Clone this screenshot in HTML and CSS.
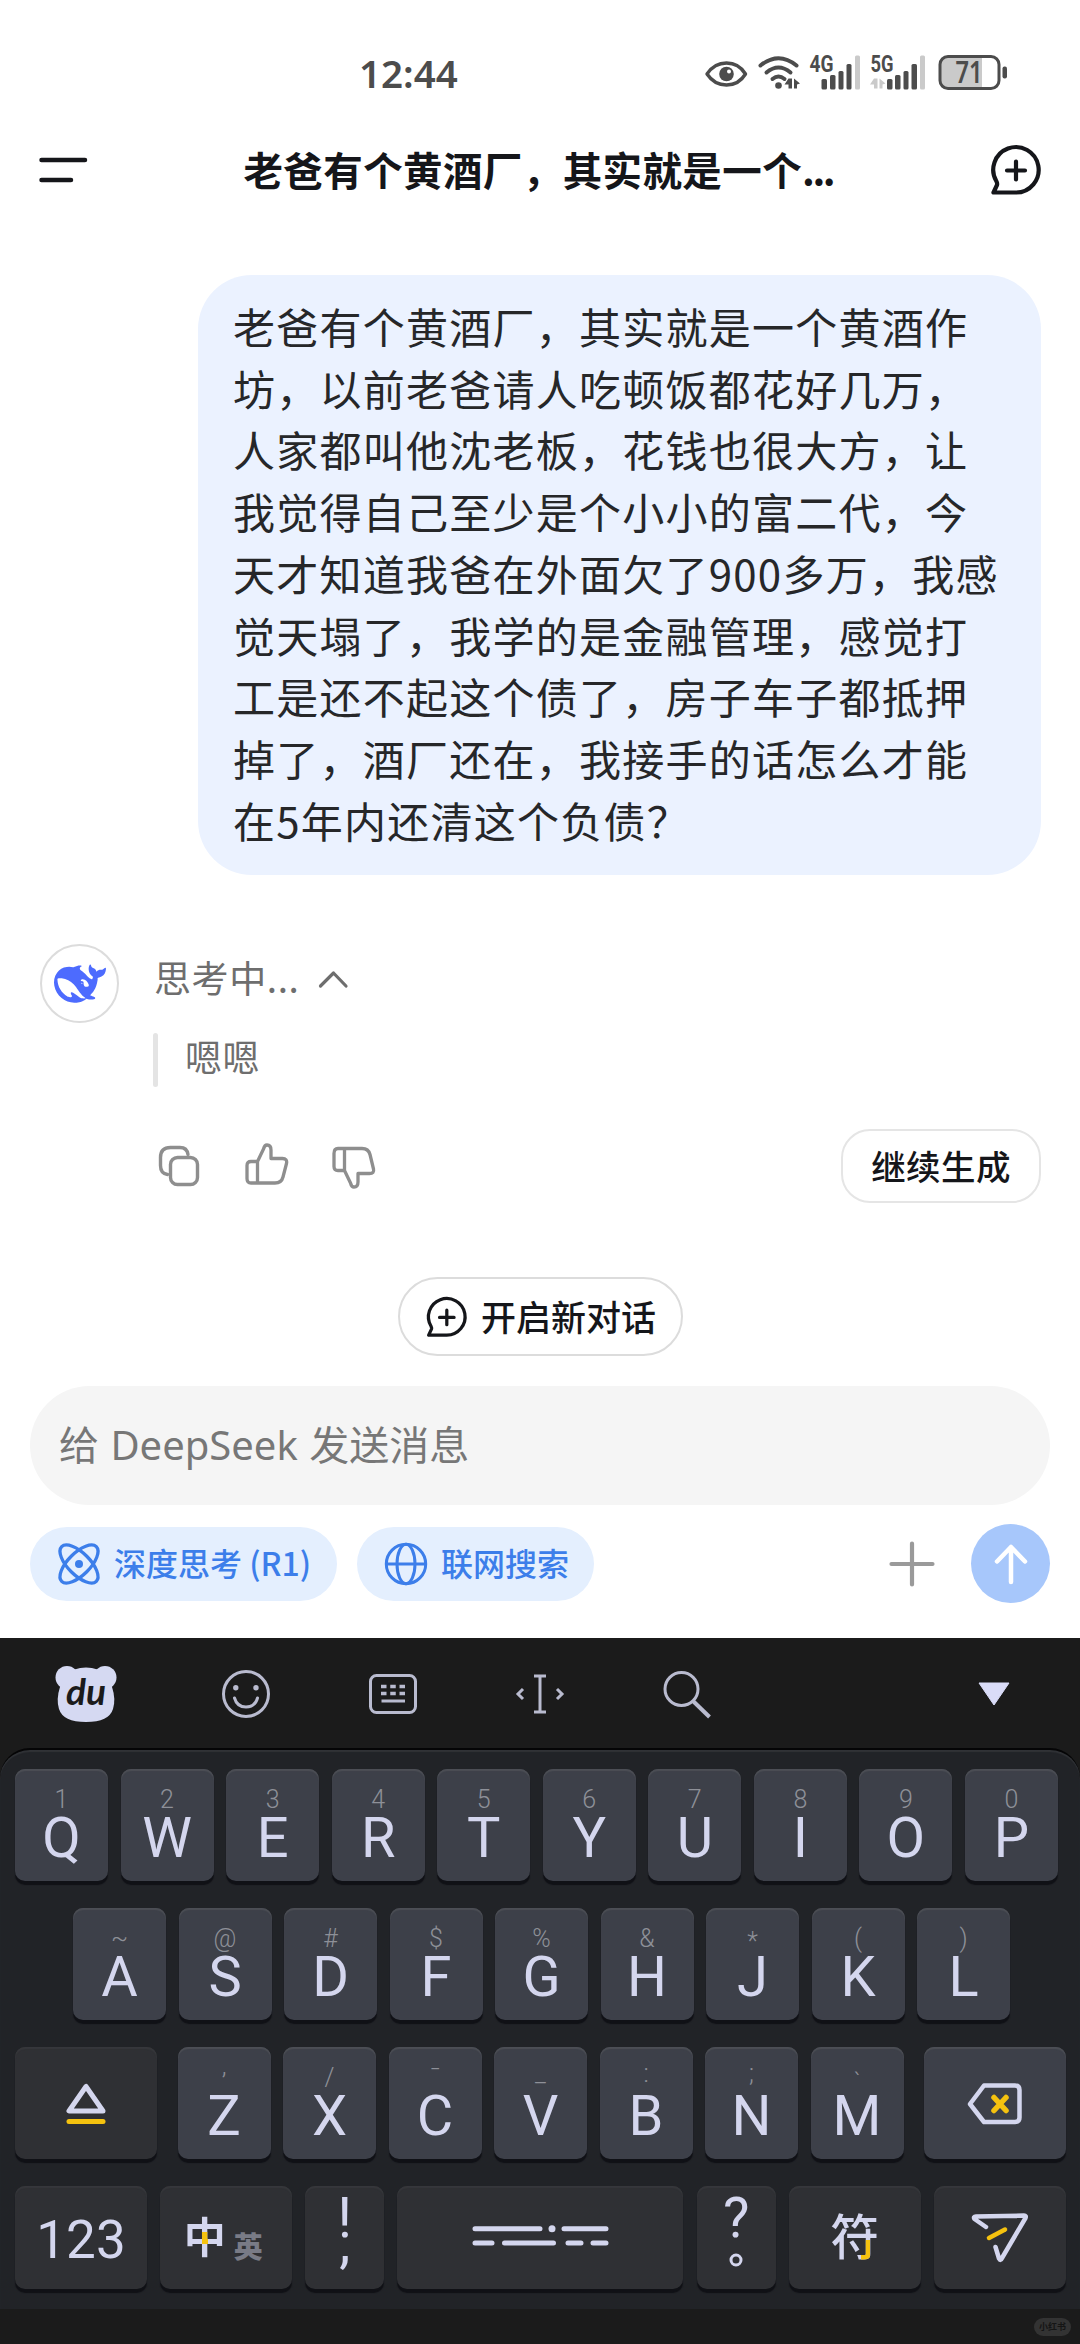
FILE: index.html
```html
<!DOCTYPE html>
<html lang="zh-CN">
<head>
<meta charset="utf-8">
<title>DeepSeek</title>
<link rel="stylesheet" href="styles.css">
</head>
<body>
<div class="screen">
  <div class="status">
    <span class="clock">12:44</span>
    <svg class="status-icons" width="306" height="36" viewBox="0 0 306 36">
      <!-- eye -->
      <path d="M2 20C8 11 15 9 21.500 9S35 11 40.500 20C35 29 28 31 21.500 31S8 29 2 20Z" fill="none" stroke="#4c4c4c" stroke-width="3.400" stroke-linejoin="round"/>
      <circle cx="21.500" cy="20" r="7.300" fill="#4c4c4c"/><circle cx="24" cy="17.500" r="2" fill="#fff"/>
      <!-- wifi -->
      <g fill="none" stroke="#4c4c4c" stroke-width="4" stroke-linecap="round"><path d="M55.500 11.500Q73.500-3 91.500 11.500"/><path d="M61.500 18.500Q73.500 8.500 85.500 18.500"/><path d="M67.500 25Q73.500 20 79.500 25"/></g>
      <circle cx="73.500" cy="31.500" r="3.300" fill="#4c4c4c"/>
      <path d="M83.500 24.500h3.500v10h-3.500v-4h-4ZM89 24.500l6 5-3 1v4h-3Z" fill="#4c4c4c"/>
      <!-- signal bars -->
      <g fill="#4c4c4c"><rect x="116.500" y="25" width="5.500" height="10.500" rx="1.500"/><rect x="125" y="21" width="5.500" height="14.500" rx="1.500"/><rect x="133.500" y="17" width="5" height="18.500" rx="1.500"/><rect x="141.500" y="10" width="5" height="25.500" rx="1.500"/>
      <rect x="182" y="25" width="5.500" height="10.500" rx="1.500"/><rect x="190" y="21" width="5.500" height="14.500" rx="1.500"/><rect x="198.500" y="17" width="5" height="18.500" rx="1.500"/><rect x="206.500" y="10" width="5.500" height="25.500" rx="1.500"/></g>
      <g fill="#cacaca"><rect x="150" y="1.500" width="5" height="34" rx="1.500"/><rect x="215" y="1.500" width="5" height="34" rx="1.500"/><path d="M169 24.500h3.500v10h-3.500v-4h-4ZM174.500 24.500l6 5-3 1v4h-3Z"/></g>
      <text class="net" x="104.500" y="18" textLength="24" lengthAdjust="spacingAndGlyphs">4G</text>
      <text class="net" x="165.500" y="18" textLength="23" lengthAdjust="spacingAndGlyphs">5G</text>
      <!-- battery -->
      <path d="M277 3.500v30H243q-7 0-7-7v-16q0-7 7-7Z" fill="#cacaca"/>
      <rect x="235" y="2.500" width="59" height="32" rx="8" fill="none" stroke="#4c4c4c" stroke-width="3"/>
      <rect x="297.500" y="12.500" width="4.500" height="12" rx="2" fill="#4c4c4c"/>
      <text class="level" x="250.500" y="28.500" textLength="27" lengthAdjust="spacingAndGlyphs">71</text>
    </svg>
  </div>

  <header class="header">
    <svg width="49" height="28" viewBox="0 0 49 28"><path d="M2.500 4h43.500M2.500 24h29.500" stroke="#15161a" stroke-width="4.500" stroke-linecap="round"/></svg>
    <h1 class="title">老爸有个黄酒厂，其实就是一个<span class="dots">...</span></h1>
    <svg width="52" height="52" viewBox="0 0 52 52" fill="none" stroke="#15161a" stroke-width="4.200" stroke-linecap="round" stroke-linejoin="round"><path d="M4.500 48.500H27A22.700 22.700 0 1 0 7.500 37.500Q8.500 39.500 8 41Z"/><path d="M27 17.500v18M18 26.500h18"/></svg>
  </header>

  <main class="chat">
    <div class="bubble">老爸有个黄酒厂，其实就是一个黄酒作坊，以前老爸请人吃顿饭都花好几万，人家都叫他沈老板，花钱也很大方，让我觉得自己至少是个小小的富二代，今天才知道我爸在外面欠了900多万，我感觉天塌了，我学的是金融管理，感觉打工是还不起这个债了，房子车子都抵押掉了，酒厂还在，我接手的话怎么才能在5年内还清这个负债？</div>
    <div class="reply">
      <div class="avatar">
        <svg width="52" height="52" viewBox="0 0 24 24" fill="#4d6bfe"><path fill-rule="evenodd" d="M23.748 4.482c-.254-.124-.364.113-.512.234-.051.039-.094.09-.137.136-.372.397-.806.657-1.373.626-.829-.046-1.537.214-2.163.848-.133-.782-.575-1.248-1.247-1.548-.352-.156-.708-.311-.955-.65-.172-.241-.219-.51-.305-.774-.055-.16-.11-.323-.293-.35-.2-.031-.278.136-.356.276-.313.572-.434 1.202-.422 1.84.027 1.436.633 2.58 1.838 3.393.137.093.172.187.129.323-.082.28-.18.552-.266.833-.055.179-.137.217-.329.14a5.526 5.526 0 0 1-1.736-1.18c-.857-.828-1.631-1.742-2.597-2.458a11.365 11.365 0 0 0-.689-.471c-.985-.957.13-1.743.388-1.836.27-.098.093-.432-.779-.428-.872.004-1.67.295-2.687.684a3.055 3.055 0 0 1-.465.137 9.597 9.597 0 0 0-2.883-.102c-1.885.21-3.39 1.102-4.497 2.623C.082 8.606-.231 10.684.152 12.85c.403 2.284 1.569 4.175 3.36 5.653 1.858 1.533 3.997 2.284 6.438 2.14 1.482-.085 3.133-.284 4.994-1.86.47.234.962.327 1.78.397.63.059 1.236-.03 1.705-.128.735-.156.684-.837.419-.961-2.155-1.004-1.682-.595-2.113-.926 1.096-1.296 2.746-2.642 3.392-7.003.05-.347.007-.565 0-.845-.004-.17.035-.237.23-.256a4.173 4.173 0 0 0 1.545-.475c1.396-.763 1.96-2.015 2.093-3.517.02-.23-.004-.467-.247-.588zM11.581 18c-2.089-1.642-3.102-2.183-3.52-2.16-.392.024-.321.471-.235.763.09.288.207.486.371.739.114.167.192.416-.113.603-.673.416-1.842-.14-1.897-.167-1.361-.802-2.5-1.86-3.301-3.307-.774-1.393-1.224-2.887-1.298-4.482-.02-.386.093-.522.477-.592a4.696 4.696 0 0 1 1.529-.039c2.132.312 3.946 1.265 5.468 2.774.868.86 1.525 1.887 2.202 2.891.72 1.066 1.494 2.082 2.48 2.914.348.292.625.514.891.677-.802.09-2.14.11-3.054-.614zM12.600 11.500a.4.4 0 0 1 .6.200a.3.3 0 0 1-.6-.200zM15.700 13.160c-.8.330-1.700.200-1.950-.7-.200-.8.1-1.100-.3-1.600-.3-.350-.8-.1-1.050-.4-.150-.3.350-.6.900-.6 1.300.050 2.100 1.100 2.600 2.100.250.550.250.980-.200 1.200z"/></svg>
      </div>
      <div class="reply-body">
        <div class="thinking"><span>思考中...</span>
          <svg width="30" height="18" viewBox="0 0 30 18" fill="none" stroke="#6e6e6e" stroke-width="3.200" stroke-linecap="round" stroke-linejoin="round"><path d="M2.500 16 15.500 3 28 16"/></svg>
        </div>
        <div class="quote">嗯嗯</div>
        <div class="actions">
          <svg width="45" height="48" viewBox="0 0 45 48" fill="none" stroke="#8e8e8e" stroke-width="3.400" stroke-linecap="round"><rect x="12.500" y="15.500" width="27" height="27" rx="7"/><path d="M30 12.500Q29 5.500 22 5.500H12.500Q2.500 5.500 2.500 15.500v8Q2.500 31.500 9.500 32.500"/></svg>
          <svg width="46" height="48" viewBox="0 0 46 48" fill="none" stroke="#8e8e8e" stroke-width="3.300" stroke-linejoin="round"><path d="M13 19.500H7Q3 19.500 3 23.500v13Q3 41 7 41H31Q37.500 41 39 35L42.500 21.500Q43.500 16.500 38.500 16.500H27V8Q27 3 23 3 20.500 3 19.500 7L13.500 19.500V41"/></svg>
          <svg width="46" height="48" viewBox="0 0 46 48" fill="none" stroke="#8e8e8e" stroke-width="3.300" stroke-linejoin="round"><path d="M13 28.500H7Q3 28.500 3 24.500v-13Q3 6.500 7 6.500H31Q37.500 6.500 39 12.500L42.500 27Q43.500 31.500 38.500 31.500H27V40Q27 45 23 45 20.500 45 19.500 41L13.500 28.500V6.500"/></svg>
          <button class="continue">继续生成</button>
        </div>
      </div>
    </div>
    <button class="new-chat">
      <svg width="42" height="42" viewBox="0 0 52 52" fill="none" stroke="#15161a" stroke-width="4" stroke-linecap="round" stroke-linejoin="round"><path d="M4.500 48.500H27A22.700 22.700 0 1 0 7.500 37.500Q8.500 39.500 8 41Z"/><path d="M27 17.500v18M18 26.500h18"/></svg>
      <span>开启新对话</span>
    </button>
  </main>

  <div class="composer">
    <div class="input">给 DeepSeek 发送消息</div>
    <div class="tools">
      <span class="chip chip-think">
        <svg width="44" height="44" viewBox="0 0 44 44" fill="none" stroke="#3c7eea" stroke-width="3.300"><ellipse cx="22" cy="22" rx="11" ry="24.500" transform="rotate(45 22 22)"/><ellipse cx="22" cy="22" rx="11" ry="24.500" transform="rotate(-45 22 22)"/><circle cx="22" cy="22" r="4" fill="#3c7eea" stroke="none"/></svg>
        <span>深度思考 (R1)</span></span>
      <span class="chip chip-web">
        <svg width="44" height="44" viewBox="0 0 44 44" fill="none" stroke="#3c7eea" stroke-width="3"><circle cx="22" cy="22" r="19.700"/><ellipse cx="22" cy="22" rx="9" ry="19.700"/><path d="M2.500 22h39"/></svg>
        <span>联网搜索</span></span>
      <svg class="plus" width="46" height="46" viewBox="0 0 46 46"><path d="M23 2.500v41M2.500 23h41" stroke="#9a9a9a" stroke-width="4.200" stroke-linecap="round"/></svg>
      <span class="send"><svg width="36" height="42" viewBox="0 0 36 42" fill="none" stroke="#fff" stroke-width="4.500" stroke-linecap="round" stroke-linejoin="round"><path d="M18 39V4M4 18.500 18 4l14 14.500"/></svg></span>
    </div>
  </div>

  <div class="keyboard">
    <div class="toolbar">
      <span class="tool first"><svg width="64" height="58" viewBox="0 0 64 58"><g fill="#d5d9f2"><circle cx="13" cy="12.500" r="11.500"/><circle cx="51" cy="12.500" r="11.500"/><path d="M10 10Q20 2.500 32 2.500T54 10L58 22Q62 34 59 44 55 57 32 57T5 44Q2 34 6 22Z"/></g><text class="du" x="12" y="40" textLength="40" lengthAdjust="spacingAndGlyphs">du</text></svg></span>
      <span class="tool"><svg width="50" height="50" viewBox="0 0 50 50" fill="none" stroke="#b9bbcf" stroke-width="3"><circle cx="25" cy="25" r="22.500"/><path d="M13.500 29Q16 38 25 38t11.500-9" stroke-linecap="round"/><g fill="#b9bbcf" stroke="none"><circle cx="14.800" cy="18.800" r="2.700"/><circle cx="35" cy="18.800" r="2.700"/></g></svg></span>
      <span class="tool"><svg width="50" height="42" viewBox="0 0 50 42" fill="none" stroke="#b9bbcf" stroke-width="3"><rect x="2.500" y="2.500" width="45" height="37" rx="6"/><path d="M13 13.500h24M13 20.500h24" stroke-width="3.400" stroke-dasharray="5.500 3.750"/><path d="M13.500 28h23.500"/></svg></span>
      <span class="tool"><svg width="50" height="42" viewBox="0 0 50 42" fill="none" stroke="#b9bbcf" stroke-width="3"><path d="M25 3v36M19 3h12M19 39h12M8 16l-5 5 5 5M42 16l5 5-5 5"/></svg></span>
      <span class="tool"><svg width="50" height="50" viewBox="0 0 50 50" fill="none" stroke="#b9bbcf" stroke-width="3"><circle cx="19.500" cy="20" r="16.500"/><path d="M31 32 47.500 48" stroke-width="4"/></svg></span>
      <span class="tool last"><svg width="34" height="24" viewBox="0 0 34 24"><path d="M2 1h30L17 23Z" fill="#dadcf8" stroke="#dadcf8" stroke-width="1" stroke-linejoin="round"/></svg></span>
    </div>
    <div class="keys">
      <div class="row">
        <div class="key"><i>1</i><b>Q</b></div><div class="key"><i>2</i><b>W</b></div><div class="key"><i>3</i><b>E</b></div><div class="key"><i>4</i><b>R</b></div><div class="key"><i>5</i><b>T</b></div><div class="key"><i>6</i><b>Y</b></div><div class="key"><i>7</i><b>U</b></div><div class="key"><i>8</i><b>I</b></div><div class="key"><i>9</i><b>O</b></div><div class="key"><i>0</i><b>P</b></div>
      </div>
      <div class="row row-home">
        <div class="key"><i>~</i><b>A</b></div><div class="key"><i>@</i><b>S</b></div><div class="key"><i>#</i><b>D</b></div><div class="key"><i>$</i><b>F</b></div><div class="key"><i>%</i><b>G</b></div><div class="key"><i>&amp;</i><b>H</b></div><div class="key"><i class="star">*</i><b>J</b></div><div class="key"><i>(</i><b>K</b></div><div class="key"><i>)</i><b>L</b></div>
      </div>
      <div class="row row-lower">
        <div class="key dark wide"><svg width="42" height="42" viewBox="0 0 42 42" fill="none" stroke-width="5" stroke-linecap="round" stroke-linejoin="round"><path d="M21 3.500 4 28h34Z" stroke="#d4d6ee"/><path d="M4 38.500h34" stroke="#f5c20f"/></svg></div>
        <div class="letters">
          <div class="key"><i class="low">’</i><b>Z</b></div><div class="key"><i>/</i><b>X</b></div><div class="key"><i>¯</i><b>C</b></div><div class="key"><i class="high">_</i><b>V</b></div><div class="key"><i class="high">:</i><b>B</b></div><div class="key"><i class="high">;</i><b>N</b></div><div class="key"><i class="low">`</i><b>M</b></div>
        </div>
        <div class="key wide"><svg width="56" height="44" viewBox="0 0 56 44" fill="none" stroke-width="4.500" stroke-linecap="round" stroke-linejoin="round"><path d="M17 3.500H48Q52.500 3.500 52.500 8V35.500Q52.500 40 48 40H17L3 22Z" stroke="#d4d6ee"/><path d="M27 15.500 39 28.500M39 15.500 27 28.500" stroke="#f5c20f" stroke-width="5.500"/></svg></div>
      </div>
      <div class="row row-bottom">
        <div class="key dark fn num">123</div>
        <div class="key dark fn lang"><span class="zh">中</span><span class="en">英</span></div>
        <div class="key dark punct"><span>!</span><span class="comma">,</span></div>
        <div class="key dark space"><svg width="140" height="24" viewBox="0 0 140 24" stroke="#d4d6ee" stroke-width="5" stroke-linecap="round"><path d="M5 4.800h65M94 4.800h42M5 19h17M34.500 19h49M98 19h13M123 19h13"/><circle cx="82" cy="4.800" r="3.500" fill="#d4d6ee" stroke="none"/></svg></div>
        <div class="key dark punct"><span>?</span><svg width="14" height="14" viewBox="0 0 14 14"><circle cx="7" cy="7" r="5" fill="none" stroke="#d4d6ee" stroke-width="3"/></svg></div>
        <div class="key dark fn"><span class="sym">符</span></div>
        <div class="key dark fn"><svg width="58" height="50" viewBox="0 0 58 50" fill="none" stroke-width="4.500" stroke-linecap="round" stroke-linejoin="round"><path d="M15 14 3.500 6Q2 3.800 5 3.600L53 2.500Q55.500 2.500 54.500 5L31 45Q29.500 48.500 28 45.500L24.500 34" stroke="#d4d6ee"/><path d="M18 25 34 16.500" stroke="#f5c20f"/></svg></div>
      </div>
    </div>
    <div class="foot"><span class="mark">小红书</span></div>
  </div>
</div>
</body>
</html>
```

FILE: styles.css
```css
* { box-sizing: border-box; }
body { margin: 0; background: #fff; }
svg { display: block; flex: none; overflow: visible; }
button { margin: 0; font: inherit; cursor: pointer; }

.screen {
  width: 1080px;
  height: 2344px;
  overflow: hidden;
  display: flex;
  flex-direction: column;
  background: #fff;
  color: #15161a;
  font-family: "Noto Sans CJK SC", sans-serif;
}

/* Status bar */
.status {
  height: 120px;
  padding: 54px 69px 0 359px;
  display: flex;
  justify-content: space-between;
  color: #4c4c4c;
  font-family: "Noto Sans", sans-serif;
}
.clock { font-size: 38.500px; line-height: 38px; font-weight: 600; }
.net { font: 700 23px Roboto, sans-serif; fill: #4c4c4c; }
.level { font: 600 30px "Noto Sans", sans-serif; fill: #4c4c4c; }

/* Header */
.header {
  height: 100px;
  padding: 0 39px 0 38.500px;
  display: flex;
  align-items: center;
  justify-content: space-between;
}
.title { margin: 0; padding-bottom: 3px; font-size: 39.500px; letter-spacing: .4px; line-height: 60px; font-weight: 700; }
.dots { letter-spacing: -2.500px; }

/* Conversation */
.chat { padding: 55px 39px 0 40px; display: flex; flex-direction: column; }
.bubble {
  width: 843px;
  height: 600px;
  align-self: flex-end;
  padding: 20px 32px 0 35px;
  border-radius: 54px;
  background: #ebf2ff;
  color: #262729;
  font-size: 42px;
  letter-spacing: 1.250px;
  line-height: 61.700px;
}
.reply { margin-top: 69px; display: flex; gap: 35px; }
.avatar {
  width: 79px;
  height: 79px;
  flex: none;
  display: flex;
  align-items: center;
  justify-content: center;
  border: 2px solid #dcdcdc;
  border-radius: 50%;
}
.reply-body { flex: 1; color: #6e6e6e; font-size: 37px; letter-spacing: .6px; }
.thinking { height: 70px; display: flex; align-items: center; gap: 19px; }
.thinking span { padding-bottom: 5px; }
.quote {
  position: relative;
  height: 54px;
  margin-top: 19px;
  padding-left: 31px;
  line-height: 46px;
}
.quote::before {
  content: "";
  position: absolute;
  left: -1px;
  top: 0;
  width: 5px;
  height: 54px;
  border-radius: 3px;
  background: #e4e4e4;
}
.actions { margin-top: 42px; padding-left: 4px; display: flex; align-items: center; gap: 41px; }
.continue {
  width: 200px;
  height: 74px;
  margin-left: auto;
  padding: 0 0 3px;
  border: 2px solid #e5e5e5;
  border-radius: 29px;
  background: #fff;
  color: #15161a;
  font-size: 34.500px;
  font-weight: 500;
  letter-spacing: .4px;
}
.new-chat {
  width: 285px;
  height: 79px;
  margin-top: 74px;
  align-self: center;
  display: flex;
  align-items: center;
  justify-content: center;
  gap: 14px;
  padding: 0;
  border: 2px solid #dcdcdc;
  border-radius: 40px;
  background: #fff;
  color: #15161a;
  font-size: 35px;
  font-weight: 500;
}
.new-chat span { padding-bottom: 3px; }

/* Message composer */
.composer { height: 282px; padding: 30px 30px 0; }
.input {
  height: 119px;
  padding-left: 29px;
  border-radius: 60px;
  background: #f5f5f5;
  color: #777;
  font-family: "Noto Sans", "Noto Sans CJK SC", sans-serif;
  font-size: 40px;
  line-height: 117px;
  word-spacing: 1px;
}
.tools { height: 79px; margin-top: 19px; display: flex; align-items: center; }
.chip {
  height: 74px;
  display: flex;
  align-items: center;
  gap: 13px;
  padding-left: 27px;
  border-radius: 37px;
  background: #e4effe;
  color: #3c7eea;
  font-size: 32px;
  font-weight: 500;
  white-space: nowrap;
}
.chip span { padding-bottom: 3px; }
.chip-think { width: 307px; }
.chip-web { width: 237px; margin-left: 20px; }
.plus { margin-left: auto; }
.send {
  width: 79px;
  height: 79px;
  margin-left: 36px;
  display: flex;
  align-items: center;
  justify-content: center;
  border-radius: 50%;
  background: #a7c7fb;
}

/* Keyboard */
.keyboard {
  flex: 1;
  background: #1b1b1b;
  color: #d4d6ee;
  font-family: Roboto, "Noto Sans CJK SC", sans-serif;
}
.toolbar { height: 110px; display: flex; align-items: center; }
.tool { width: 147px; display: flex; justify-content: center; padding-top: 2px; }
.tool.first { width: 172px; }
.tool.last { width: 172px; margin-left: auto; }
.du { font: italic 700 36px Lato, sans-serif; fill: #1b1b1b; }
.keys {
  height: 561px;
  padding: 19px 14px 0 15px;
  display: flex;
  flex-direction: column;
  gap: 27px;
  border-top: 2px solid #050506;
  border-radius: 30px 30px 0 0;
  background: #212327;
  box-shadow: inset 0 2px 1px #303236;
}
.row { display: flex; justify-content: space-between; }
.row:first-child { padding-right: 8px; }
.row-home { padding: 0 56px 0 58px; }
.letters { width: 726px; display: flex; justify-content: space-between; }
.key {
  width: 93px;
  height: 112px;
  padding-top: 16px;
  flex: none;
  border-radius: 10px;
  background: #3d4049;
  box-shadow: 0 4px 1px #101116, inset 0 2px 1px #4c4e55;
  text-align: center;
}
.key i {
  display: block;
  height: 30px;
  color: #8e9098;
  font-size: 25px;
  font-style: normal;
  font-weight: 300;
  line-height: 30px;
}
.key .low { line-height: 40px; }
.key .high { line-height: 22px; }
.key .star { line-height: 36px; }
.key b { display: block; font-size: 56px; font-weight: 400; line-height: 47px; }
.key.wide, .key.fn, .key.space {
  display: flex;
  align-items: center;
  justify-content: center;
  padding: 0;
}
.key.wide { width: 142px; padding-top: 2px; }
.key.dark { background: #2f3034; box-shadow: 0 4px 1px #101116, inset 0 2px 1px #36373b; }
.row-bottom .key { height: 103px; }
.key.fn { width: 132px; }
.key.punct { width: 79px; }
.key.space { width: 286px; padding-bottom: 3px; }
.key.num { padding-top: 5px; font-size: 53px; }
.lang { gap: 8px; }
.zh {
  padding-top: 2px;
  font-size: 42px;
  font-weight: 700;
  line-height: 60px;
  background: linear-gradient(#f5c20f, #f5c20f) 18px 25px / 6px 12px no-repeat, #d4d6ee;
  -webkit-background-clip: text;
  background-clip: text;
  color: transparent;
}
.en { padding-top: 20px; color: #797b86; font-size: 29px; font-weight: 900; line-height: 44px; }
.lang .zh { margin-left: -6px; }
.key.punct { display: flex; flex-direction: column; align-items: center; padding-top: 8px; }
.punct span { height: 46px; font-size: 56px; line-height: 48px; }
.punct .comma { height: 40px; line-height: 7px; }
.punct svg { margin-top: 13px; }
.sym {
  padding-top: 3px;
  font-size: 49px;
  font-weight: 500;
  line-height: 70px;
  background: linear-gradient(#f5c20f, #f5c20f) 31px 39px / 9px 40px no-repeat, #d4d6ee;
  -webkit-background-clip: text;
  background-clip: text;
  color: transparent;
}
.foot { height: 35px; padding: 9px 9px 0 0; display: flex; justify-content: flex-end; }
.mark {
  width: 37px;
  height: 18px;
  border-radius: 9px;
  background: #333;
  color: #151515;
  font-size: 9px;
  font-weight: 700;
  line-height: 18px;
  text-align: center;
}
```
